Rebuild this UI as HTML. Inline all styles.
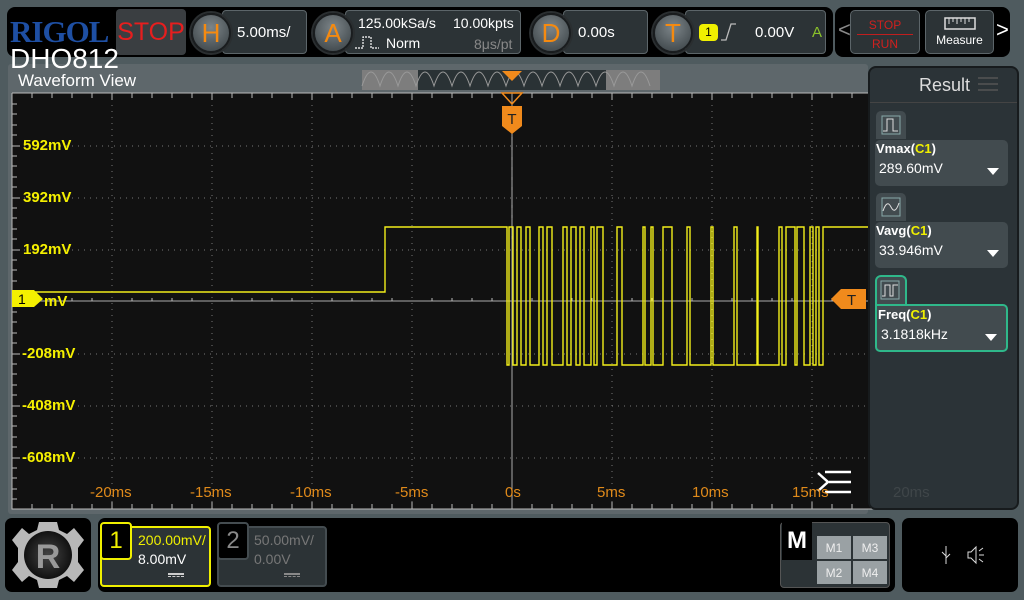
<!DOCTYPE html>
<html><head><meta charset="utf-8"><style>
*{margin:0;padding:0;box-sizing:border-box}
body{width:1024px;height:600px;background:#4f5b5f;position:relative;overflow:hidden;font-family:"Liberation Sans",sans-serif}
.a{position:absolute}
.circ{position:absolute;width:40px;height:40px;border-radius:50%;background:radial-gradient(circle at 50% 35%,#7d8589,#4b5357 70%,#3a4044);border:2px solid #1a1d1f;color:#f58a10;font-size:26px;text-align:center;line-height:36px;box-shadow:0 0 0 2px #2a2e30}
.box{position:absolute;background:#2c3336;border:1px solid #5c6569;border-radius:4px;color:#fff}
.lbl{position:absolute;color:#f5f000;font-size:15px;font-weight:bold}
.tl{position:absolute;color:#e08a1a;font-size:15px;top:484px}
.card{position:absolute;left:875px;width:133px;height:46px;background:#424b4f;border-radius:5px;color:#fff}
.card b{position:absolute;left:1px;top:1px;font-size:13px;font-weight:bold}
.card b i{font-style:normal;color:#f0f000}
.card span{position:absolute;left:4px;top:20px;font-size:14px}
.card .tri{position:absolute;right:9px;top:28px;width:0;height:0;border-left:6px solid transparent;border-right:6px solid transparent;border-top:7px solid #fff}
.ic{position:absolute;left:876px;width:30px;height:28px;background:#424b4f;border-radius:5px 5px 0 0}
</style></head><body>
<div class="a" style="left:7px;top:7px;width:826px;height:50px;background:#000;border-radius:8px"></div>
<div class="a" style="left:10px;top:14px;font-family:'Liberation Serif',serif;font-weight:bold;font-size:31px;color:#1e4fa3;letter-spacing:-1px">RIGOL</div>
<div class="a" style="left:116px;top:9px;width:70px;height:46px;background:#3a3e41;border-radius:4px;color:#e61e1e;font-size:25px;line-height:46px;text-align:center">STOP</div>
<div class="box" style="left:222px;top:10px;width:85px;height:44px;font-size:15px;line-height:44px;padding-left:14px">5.00ms/</div>
<div class="circ" style="left:191px;top:13px">H</div>
<div class="box" style="left:345px;top:10px;width:176px;height:44px"></div>
<div class="a" style="left:358px;top:15px;color:#fff;font-size:14px">125.00kSa/s</div>
<div class="a" style="left:453px;top:15px;color:#fff;font-size:14px">10.00kpts</div>
<div class="a" style="left:386px;top:35px;color:#fff;font-size:14px">Norm</div>
<div class="a" style="left:474px;top:36px;color:#888;font-size:14px">8μs/pt</div>
<svg class="a" style="left:353px;top:34px" width="30" height="16"><path d="M2,14 H10 V3 H18 V14 H26" stroke="#fff" fill="none" stroke-width="1.2" stroke-dasharray="2,1"/></svg>
<div class="circ" style="left:313px;top:13px">A</div>
<div class="box" style="left:563px;top:10px;width:85px;height:44px;font-size:15px;line-height:44px;padding-left:14px">0.00s</div>
<div class="circ" style="left:531px;top:13px">D</div>
<div class="box" style="left:685px;top:10px;width:141px;height:44px"></div>
<div class="a" style="left:699px;top:24px;width:19px;height:17px;background:#f0f000;border-radius:4px;font-size:12px;text-align:center;line-height:17px;color:#000">1</div>
<svg class="a" style="left:718px;top:20px" width="20" height="24"><path d="M3,20 H8 L13,4 H18" stroke="#bbb" fill="none" stroke-width="1.3"/></svg>
<div class="a" style="left:755px;top:24px;color:#fff;font-size:15px">0.00V</div>
<div class="a" style="left:812px;top:24px;color:#8ac22a;font-size:15px">A</div>
<div class="circ" style="left:653px;top:13px">T</div>
<div class="a" style="left:835px;top:7px;width:175px;height:50px;background:#000;border-radius:8px"></div>
<div class="a" style="left:838px;top:17px;color:#888;font-size:22px">&lt;</div>
<div class="a" style="left:850px;top:10px;width:70px;height:44px;background:#2c3336;border:1px solid #5c6569;border-radius:5px;color:#d0201e;font-size:12px;text-align:center">
<div style="margin-top:7px">STOP</div><div style="border-top:1px solid #c01e1e;margin:2px 6px 0"></div><div style="margin-top:2px">RUN</div></div>
<div class="a" style="left:925px;top:10px;width:69px;height:44px;background:#2c3336;border:1px solid #5c6569;border-radius:5px;color:#fff;font-size:12px;text-align:center">
<svg width="36" height="16" style="margin-top:5px"><rect x="3" y="2" width="30" height="11" fill="none" stroke="#ddd" stroke-width="1.5"/><path d="M7,2V8M11,2V6M15,2V8M19,2V6M23,2V8M27,2V6" stroke="#ddd"/></svg><div style="margin-top:-2px">Measure</div></div>
<div class="a" style="left:996px;top:17px;color:#fff;font-size:22px">&gt;</div>
<div class="a" style="left:8px;top:64px;width:860px;height:450px;background:#5e676b;border-radius:3px"></div>
<div class="a" style="left:10px;top:44px;color:#fff;font-size:28px;line-height:30px">DHO812</div>
<div class="a" style="left:18px;top:71px;color:#fff;font-size:17px">Waveform View</div>
<svg class="a" style="left:0;top:0" width="1024" height="600">
<rect x="362" y="70" width="298" height="20" fill="#2a3235"/>
<rect x="362" y="70" width="56" height="20" fill="#7d7d7d"/>
<rect x="606" y="70" width="54" height="20" fill="#7d7d7d"/>
<path d="M362,86 q9,-28 18,0 q9,-28 18,0 q9,-28 18,0 q9,-28 18,0 q9,-28 18,0 q9,-28 18,0 q9,-28 18,0 q9,-28 18,0 q9,-28 18,0 q9,-28 18,0 q9,-28 18,0 q9,-28 18,0 q9,-28 18,0 q9,-28 18,0 q9,-28 18,0 q9,-28 18,0" fill="none" stroke="#999" stroke-width="1"/>
<path d="M502,71 H522 L512,81 Z" fill="#f08a1c"/>
<rect x="12" y="93" width="1000" height="416" fill="#111"/>
<g fill="none" stroke="#777" stroke-width="1" stroke-dasharray="1,5">
<path d="M112,93V509M212,93V509M312,93V509M412,93V509M612,93V509M712,93V509M812,93V509M912,93V509"/>
<path d="M12,146H1012M12,198H1012M12,250H1012M12,354H1012M12,406H1012M12,458H1012"/>
</g>
<g fill="none" stroke="#aaa" stroke-width="1">
<path d="M512,93V509M12,301H1012"/>
<path d="M12,93V509H1012M12,93H1012" stroke="#bbb"/>
</g>
<g fill="none" stroke="#bbb" stroke-width="1">
<path d="M32,93v5M52,93v5M72,93v5M92,93v5M112,93v7M132,93v5M152,93v5M172,93v5M192,93v5M212,93v7M232,93v5M252,93v5M272,93v5M292,93v5M312,93v7M332,93v5M352,93v5M372,93v5M392,93v5M412,93v7M432,93v5M452,93v5M472,93v5M492,93v5M532,93v5M552,93v5M572,93v5M592,93v5M612,93v7M632,93v5M652,93v5M672,93v5M692,93v5M712,93v7M732,93v5M752,93v5M772,93v5M792,93v5M812,93v7M832,93v5M852,93v5"/>
<path d="M32,509v-5M52,509v-5M72,509v-5M92,509v-5M112,509v-7M132,509v-5M152,509v-5M172,509v-5M192,509v-5M212,509v-7M232,509v-5M252,509v-5M272,509v-5M292,509v-5M312,509v-7M332,509v-5M352,509v-5M372,509v-5M392,509v-5M412,509v-7M432,509v-5M452,509v-5M472,509v-5M492,509v-5M532,509v-5M552,509v-5M572,509v-5M592,509v-5M612,509v-7M632,509v-5M652,509v-5M672,509v-5M692,509v-5M712,509v-7M732,509v-5M752,509v-5M772,509v-5M792,509v-5M812,509v-7M832,509v-5M852,509v-5"/>
<path d="M12,104h5M12,114h5M12,125h5M12,135h5M12,146h8M12,156h5M12,166h5M12,177h5M12,187h5M12,198h8M12,208h5M12,218h5M12,229h5M12,239h5M12,250h8M12,260h5M12,270h5M12,281h5M12,291h5M12,312h5M12,322h5M12,333h5M12,343h5M12,354h8M12,364h5M12,374h5M12,385h5M12,395h5M12,406h8M12,416h5M12,426h5M12,437h5M12,447h5M12,458h8M12,468h5M12,478h5M12,489h5M12,499h5"/>
<path d="M32,301v-3M52,301v-3M72,301v-3M92,301v-3M132,301v-3M152,301v-3M172,301v-3M192,301v-3M232,301v-3M252,301v-3M272,301v-3M292,301v-3M332,301v-3M352,301v-3M372,301v-3M392,301v-3M432,301v-3M452,301v-3M472,301v-3M492,301v-3M532,301v-3M552,301v-3M572,301v-3M592,301v-3M632,301v-3M652,301v-3M672,301v-3M692,301v-3M732,301v-3M752,301v-3M772,301v-3M792,301v-3M832,301v-3M852,301v-3"/>
<path d="M512,130v-3M512,140v-3M512,150v-3M512,160v-3M512,170v-3M512,180v-3M512,190v-3M512,208v-3M512,218v-3M512,229v-3M512,239v-3" />
</g>
<path d="M12,292 H385 V227 H507 V365 H509 V227 H513 V365 H517 V227 H521 V365 H526 V227 H530 V365 H539 V227 H543 V365 H547 V227 H552 V365 H563 V227 H567 V365 H571 V227 H576 V365 H580 V227 H584 V365 H591 V227 H594 V365 H597 V227 H603 V365 H617 V227 H622 V365 H643 V227 H645 V365 H651 V227 H653 V365 H663 V227 H672 V365 H687 V227 H690 V365 H711 V227 H713 V365 H734 V227 H737 V365 H757 V227 H758 V365 H779 V227 H782 V365 H786 V227 H795 V365 H797 V227 H804 V365 H810 V227 H813 V365 H816 V227 H819 V365 H823 V227 H870" fill="none" stroke="#f2ee1a" stroke-width="1.4"/>
<path d="M502,93 H522 L512,104 Z" fill="none" stroke="#f08a1c" stroke-width="1.5"/>
<path d="M502,106 H522 V126 L512,134 L502,126 Z" fill="#f08a1c"/>
<text x="512" y="124" font-size="15" text-anchor="middle" fill="#222" font-family="Liberation Sans">T</text>
<path d="M12,290 H34 L43,299 L34,307 H12 Z" fill="#f5f000"/>
<text x="18" y="304" font-size="14" fill="#000" font-family="Liberation Sans">1</text>
<path d="M831,299 L841,289 H866 V309 H841 Z" fill="#f08a1c"/>
<text x="847" y="305" font-size="15" fill="#222" font-family="Liberation Sans">T</text>
<path d="M818,473 L828,482 L818,491" stroke="#fff" stroke-width="2.5" fill="none"/>
<path d="M825,472H851M829,482H851M825,492H851" stroke="#fff" stroke-width="2.5"/>
</svg>
<div class="lbl" style="left:23px;top:137px">592mV</div>
<div class="lbl" style="left:23px;top:189px">392mV</div>
<div class="lbl" style="left:23px;top:241px">192mV</div>
<div class="lbl" style="left:44px;top:293px">mV</div>
<div class="lbl" style="left:22px;top:345px">-208mV</div>
<div class="lbl" style="left:22px;top:397px">-408mV</div>
<div class="lbl" style="left:22px;top:449px">-608mV</div>
<div class="tl" style="left:90px">-20ms</div>
<div class="tl" style="left:190px">-15ms</div>
<div class="tl" style="left:290px">-10ms</div>
<div class="tl" style="left:395px">-5ms</div>
<div class="tl" style="left:505px">0s</div>
<div class="tl" style="left:597px">5ms</div>
<div class="tl" style="left:692px">10ms</div>
<div class="tl" style="left:792px">15ms</div>
<div class="a" style="left:868px;top:66px;width:151px;height:444px;background:#2b3337;border:2px solid #171b1d;border-radius:8px"></div>
<div class="a" style="left:919px;top:75px;color:#ddd;font-size:18px">Result</div>
<svg class="a" style="left:976px;top:74px" width="24" height="20"><path d="M2,4H22M2,10H22M2,16H22" stroke="#555" stroke-width="1.5"/></svg>
<div class="a" style="left:870px;top:102px;width:147px;height:1px;background:#444"></div>
<div class="a" style="left:893px;top:484px;color:#3f4649;font-size:15px">20ms</div>
<div class="ic" style="top:111px"><svg width="30" height="28"><rect x="6" y="5" width="18" height="18" fill="none" stroke="#8aa" stroke-width="1"/><path d="M7,20H11V8H17V20H22" stroke="#ddd" fill="none"/></svg></div>
<div class="card" style="top:140px"><b>Vmax(<i>C1</i>)</b><span>289.60mV</span><div class="tri"></div></div>
<div class="ic" style="top:193px"><svg width="30" height="28"><rect x="6" y="5" width="18" height="18" fill="none" stroke="#8aa" stroke-width="1"/><path d="M7,18 Q11,6 15,14 T23,10" stroke="#ddd" fill="none"/></svg></div>
<div class="card" style="top:222px"><b>Vavg(<i>C1</i>)</b><span>33.946mV</span><div class="tri"></div></div>
<div class="a" style="left:875px;top:275px;width:32px;height:32px;border:2px solid #2fb88a;border-bottom:none;border-radius:6px 6px 0 0;background:#424b4f"><svg width="28" height="28"><rect x="4" y="4" width="18" height="18" fill="none" stroke="#8aa"/><path d="M5,19H8V8H13V19H16V8H21" stroke="#ddd" fill="none"/></svg></div>
<div class="card" style="top:304px;border:2px solid #2fb88a;border-top-left-radius:0;height:48px"><b>Freq(<i>C1</i>)</b><span>3.1818kHz</span><div class="tri"></div></div>
<div class="a" style="left:5px;top:518px;width:86px;height:74px;background:#000;border-radius:7px"></div>
<svg class="a" style="left:8px;top:518px" width="80" height="74"><defs><radialGradient id="g"><stop offset="0" stop-color="#444"/><stop offset="1" stop-color="#111"/></radialGradient></defs>
<path d="M31,4H49L51,12L59,16L66,10L76,22L70,30V44L76,52L66,64L59,58L51,62L49,70H31L29,62L21,58L14,64L4,52L10,44V30L4,22L14,10L21,16L29,12Z" fill="#b8b8b8"/>
<circle cx="40" cy="37" r="24" fill="url(#g)"/>
<text x="40" y="50" font-size="34" font-weight="bold" text-anchor="middle" fill="#999" font-family="Liberation Sans">R</text></svg>
<div class="a" style="left:98px;top:518px;width:797px;height:74px;background:#000;border-radius:7px"></div>
<div class="a" style="left:100px;top:526px;width:111px;height:61px;background:#2c3336;border:2px solid #f0f000;border-radius:4px"></div>
<div class="a" style="left:100px;top:522px;width:32px;height:38px;background:#000;border:2px solid #f0f000;border-radius:4px;color:#f0f000;font-size:24px;text-align:center;line-height:34px">1</div>
<div class="a" style="left:138px;top:532px;color:#f0f000;font-size:14px">200.00mV/</div>
<div class="a" style="left:138px;top:551px;color:#fff;font-size:14px">8.00mV</div>
<div class="a" style="left:168px;top:573px;width:16px;border-top:2px solid #ccc;height:4px;border-bottom:1px dashed #ccc"></div>
<div class="a" style="left:217px;top:526px;width:110px;height:61px;background:#2c3336;border:2px solid #444c50;border-radius:4px"></div>
<div class="a" style="left:217px;top:522px;width:32px;height:38px;background:#000;border:2px solid #444c50;border-radius:4px;color:#888;font-size:24px;text-align:center;line-height:34px">2</div>
<div class="a" style="left:254px;top:532px;color:#777;font-size:14px">50.00mV/</div>
<div class="a" style="left:254px;top:551px;color:#777;font-size:14px">0.00V</div>
<div class="a" style="left:284px;top:573px;width:16px;border-top:2px solid #888;height:4px;border-bottom:1px dashed #888"></div>
<div class="a" style="left:780px;top:522px;width:110px;height:66px;background:#2c3336;border:1px solid #555;border-radius:4px"></div>
<div class="a" style="left:782px;top:522px;width:30px;height:38px;background:#000;color:#fff;font-size:24px;font-weight:bold;text-align:center;line-height:38px">M</div>
<div class="a" style="left:816px;top:535px;width:72px;height:50px;background:#9aa1a4"></div>
<div class="a" style="left:816px;top:535px;width:72px;height:50px;color:#eee;font-size:12px">
<div class="a" style="left:0;top:0;width:36px;height:25px;border:1px solid #2c3336;text-align:center;line-height:24px">M1</div>
<div class="a" style="left:36px;top:0;width:36px;height:25px;border:1px solid #2c3336;text-align:center;line-height:24px">M3</div>
<div class="a" style="left:0;top:25px;width:36px;height:25px;border:1px solid #2c3336;text-align:center;line-height:24px">M2</div>
<div class="a" style="left:36px;top:25px;width:36px;height:25px;border:1px solid #2c3336;text-align:center;line-height:24px">M4</div></div>
<div class="a" style="left:902px;top:518px;width:116px;height:74px;background:#000;border-radius:7px"></div>
<svg class="a" style="left:938px;top:544px" width="50" height="22"><path d="M8,2V20M8,12L4,8M8,14L12,10" stroke="#ddd" fill="none"/><path d="M30,8H33L38,3V19L33,14H30Z M41,7L45,4M41,11H46M41,15L45,18" stroke="#ddd" fill="none"/></svg>
</body></html>
